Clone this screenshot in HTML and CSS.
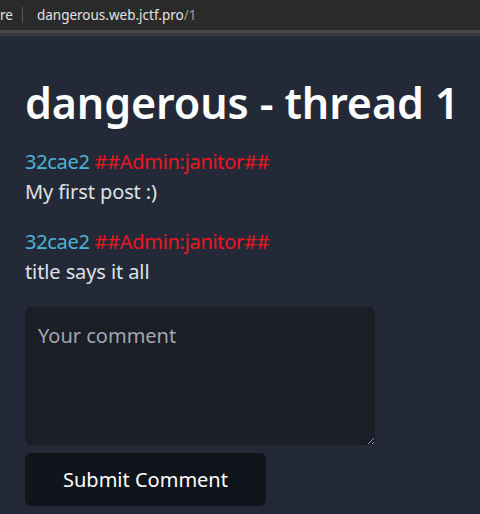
FILE: index.html
```html
<!DOCTYPE html>
<html>
<head>
<meta charset="utf-8">
<link rel="stylesheet" href="styles.css">
</head>
<body>
<div class="chrome">
  <div class="tabbar">
    <span class="tail">re</span>
    <span class="sep"></span>
    <span class="url">dangerous.web.jctf.pro<span class="path">/1</span></span>
  </div>
  <div class="edge1"></div>
  <div class="edge2"></div>
</div>
<main class="page">
  <h1 class="title">dangerous - thread 1</h1>
  <div class="post">
    <div class="meta"><span class="user">32cae2</span> <span class="role">##Admin:janitor##</span></div>
    <p class="body">My first post :)</p>
  </div>
  <div class="post">
    <div class="meta"><span class="user">32cae2</span> <span class="role">##Admin:janitor##</span></div>
    <p class="body">title says it all</p>
  </div>
  <form class="form">
    <textarea class="comment" placeholder="Your comment"></textarea>
    <button type="button" class="submit">Submit Comment</button>
  </form>
</main>
</body>
</html>
```
FILE: styles.css
```css
html, body {
  margin: 0;
  padding: 0;
  background: #232937;
  height: 100%;
  overflow: hidden;
}
body {
  font-family: "Noto Sans", "Open Sans", sans-serif;
  color: #dee2e6;
}
.chrome {
  display: flex;
  flex-direction: column;
}
.tabbar {
  height: 31px;
  background: #2a2a2a;
  display: flex;
  align-items: center;
  font-family: "Noto Sans", sans-serif;
  font-size: 13.5px;
  color: #e3e3e3;
  margin-top: -1px;
}
.sep {
  width: 1px;
  height: 16px;
  background: #5a5a5a;
  margin: 0 14px 0 9px;
}
.path {
  color: #9c9c9c;
}
.edge1 {
  height: 3px;
  background: #484848;
}
.edge2 {
  height: 3px;
  background: #3a3a3a;
}
.page {
  padding: 0 25px;
}
.title {
  margin: 41px 0 18px;
  font-size: 43px;
  font-weight: 600;
  line-height: 1.2;
  color: #ffffff;
  letter-spacing: -0.1px;
  white-space: nowrap;
}
.post {
  font-size: 20px;
  line-height: 30px;
  margin-bottom: 20px;
}
.meta {
  letter-spacing: -0.3px;
}
.user {
  color: #4cb5d4;
}
.role {
  color: #ee1620;
}
.body {
  margin: 0;
  letter-spacing: -0.1px;
}
.form {
  display: flex;
  flex-direction: column;
  align-items: flex-start;
  gap: 8px;
  margin-top: 19px;
}
.comment {
  width: 350px;
  height: 138px;
  box-sizing: border-box;
  background: #1a1e26;
  border: none;
  border-radius: 6px;
  padding: 14px 13px;
  font-family: inherit;
  font-size: 20px;
  color: #dee2e6;
  line-height: 1.5;
  margin: 0;
  resize: vertical;
}
.comment::placeholder {
  color: #a3a7ad;
}
.submit {
  width: 241px;
  height: 53px;
  background: #10151c;
  border: none;
  border-radius: 6px;
  font-family: inherit;
  font-size: 20px;
  color: #ffffff;
  padding: 0;
}
```
